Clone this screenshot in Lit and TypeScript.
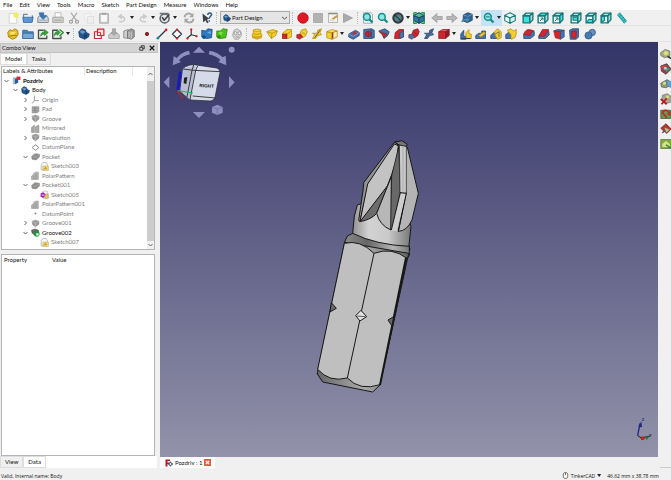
import { LitElement, html, css, svg } from "lit";
import { customElement, property } from "lit/decorators.js";

const p = (d: string, fill = "none", stroke = "none", w = 1) =>
  svg`<path d=${d} fill=${fill} stroke=${stroke} stroke-width=${w} stroke-linejoin="round"></path>`;
const c = (x: number, y: number, r: number, fill = "none", stroke = "none", w = 1) =>
  svg`<circle cx=${x} cy=${y} r=${r} fill=${fill} stroke=${stroke} stroke-width=${w}></circle>`;

const hexBox = (top: string, left: string, right: string, line: string) =>
  svg`${p("M8 1L15 4.500L8 8L1 4.500Z", top, line, 1.400)}${p("M1 4.500L8 8V15L1 11.500Z", left, line, 1.400)}${p("M8 8L15 4.500V11.500L8 15Z", right, line, 1.400)}`;

const T = "#17797a";
const C = "#3ce0dc";
const teal = (face: number) => svg`
  ${p("M1.500 5H10.500V14.500H1.500Z", face === 0 ? C : "#eefafa", T, 1.800)}
  ${p("M1.500 5L5.500 1.500H14.500L10.500 5Z", face === 1 ? C : "#b9e6e4", T, 1.800)}
  ${p("M10.500 5L14.500 1.500V10.500L10.500 14.500Z", face === 2 ? C : "#a4dbd9", T, 1.800)}
  ${face === 1 || face === 2 ? p("M4 12L8 8M5 8H8V11", "none", T, 1.300) : ""}
  ${face === 3 ? p("M4 7H10V11H4Z", C, T, 1.400) : ""}
  ${face === 4 ? p("M2 14L5 10H10V14Z", C, T, 1.400) : ""}
  ${face === 5 ? p("M2 6L6 6V11L2 14Z", C, T, 1.400) : ""}`;

const lens = (handle: string) => svg`${p("M9 9L14 14", "none", handle, 3)}${c(6.5, 6.5, 4.500, "#8fe6e4", handle, 2)}`;
const Y = "#f2d02c", YD = "#b98a10", R = "#cf2630", RD = "#8e1b28", B = "#4673ab", BD = "#23446f";

const feature = (kind: number, a: string, ad: string, b: string) => [
  svg`${p("M2 10V13L8 15L14 13V10Z", b, ad, 0.8)}${p("M1 9C3 6 13 6 15 9C13 13 3 13 1 9Z", a, ad, 1)}${p("M3 3V7C5 9 11 9 13 7V3Z", a, ad, 1)}${p("M3 3C5 1 11 1 13 3C11 5 5 5 3 3Z", "#fae66c", ad, 1)}`,
  svg`${p("M1 5L9 2L15 4L13 10L7 14Z", a, ad, 1)}${p("M1 5L8 7L15 4M8 7L7 14", "none", ad, 1)}`,
  svg`${p("M2 7L8 2H14V12L9 14H2Z", a, ad, 1)}${p("M2 8H8V14H2Z", b, RD, 0.8)}${p("M8 8L14 4", "none", ad, 1)}`,
  svg`${p("M7 3L13 1L15 5L13 10L9 13L5 9Z", a, ad, 1)}${p("M1 9L6 8L9 12L5 15L1 13Z", b, RD, 0.8)}${p("M8 6L12 8", "none", ad, 1)}`,
  svg`${p("M2 14L5 9L2 7L8 7L9 3L14 1L12 6L14 9L9 10L6 14Z", a, ad, 1)}${p("M5 13L12 3", "none", "#555", 1.300)}`,
  svg`${p("M1 5L8 6V15L1 13Z", a, ad, 1)}${p("M8 6L15 4V12L8 15Z", b, ad, 1)}${p("M1 5L8 2L15 4L8 6Z", "#fae66c", ad, 1)}${p("M9 6V14", "none", RD, 1.500)}`,
][kind];

const arrowCurve = (col: string) => svg`${p("M4 13C13 14 14 6 7 6", "none", col, 2)}${p("M8 2V10L2 6Z", col)}`;

const icons: Record<string, unknown> = {
  new: svg`${p("M3 2H13V15H3Z", "#fcfcfa", "#c9c9c4", 1)}${c(12, 4, 3.500, "#f1ef55")}`,
  open: svg`${p("M2 3H7L8 5H14V13H2Z", "#829bb5", "#536b83", 1)}${p("M3 4H13V8H3Z", "#f0f0f0")}${p("M1 7H15L13 14H2Z", "#5b96d6", "#346b9f", 1)}`,
  save: svg`${p("M1 8L3 5H13L15 8V14H1Z", "#d4d8db", "#65717c", 1)}${p("M3 1H9V5H13L8 10L4 5H6L3 3Z", "#3978c0", "#285e9d", 0.7)}${p("M3 11H13", "none", "#899aa8", 1)}`,
  print: svg`${p("M4 1H12V7H4Z", "#fff", "#aaa", 1)}${p("M1 7H15V14H1Z", "#d0d0cf", "#9b9b9b", 1)}${p("M3 11H13", "none", "#999", 1)}`,
  cut: svg`${p("M4 1L11 11M12 1L5 11", "none", "#a6a6a6", 1.600)}${c(4, 13, 2, "none", "#999", 1.500)}${c(12, 13, 2, "none", "#999", 1.500)}`,
  copy: svg`${p("M2 2H10V11H2Z", "#f4f4f4", "#e2e2e2", 1)}${p("M6 6H14V15H6Z", "#eee", "#dadada", 1)}`,
  paste: svg`${p("M2 2H14V15H2Z", "#c9c9c9", "#a6a6a6", 1)}${p("M4 4H12V13H4Z", "#f8f8f8")}${p("M5 1H11V4H5Z", "#aaa")}`,
  undo: arrowCurve("#cacaca"),
  redo: svg`<g transform="translate(16 0) scale(-1 1)">${arrowCurve("#cacaca")}</g>`,
  check: svg`${c(7.5, 8.5, 6, "#e3e6e7", "#596067", 2)}${p("M4 7L7 11L14 3", "none", "#394047", 2)}${p("M1 2H13", "none", "#6b7379", 2)}`,
  refresh: svg`${p("M2 7C3 1 9 1 12 4M14 9C13 15 7 15 4 12", "none", "#a6a6a6", 2.400)}${p("M14 1V7H8ZM2 15V9H8Z", "#a6a6a6")}`,
  what: svg`${p("M2 2L3 14L6 11L8 15L10 14L8 10L11 9Z", "#3a4147")}${p("M9 4C9 0 15 1 14 4C13 6 11 6 11 9M11 11V13", "none", "#2f5b8b", 2)}`,
  record: c(8, 8, 7, "#e11722", "#b20d18", 1),
  stop: p("M2 2H14V14H2Z", "#b2b2b2", "#9f9f9f", 1),
  edit: svg`${p("M2 2H14V14H2Z", "#f3f3ee", "#a4a49d", 1)}${p("M2 2H14", "none", "#8a8a80", 2)}${p("M4 11H10", "none", "#c0c0ba", 1)}${p("M6 9L13 4L15 6L9 10Z", "#c99a4a")}`,
  play: p("M2 2L14 8L2 14Z", "#aaa", "#999", 1),
  fit: svg`${p("M2 1H12L14 3V15H2Z", "#edf4f4", "#999", 1)}${lens("#168b8c")}`,
  fitSel: lens("#168b8c"),
  draw: svg`${c(8, 8, 6.300, "#61777c", "#2c393d", 2.600)}${c(8, 8, 2.500, "#38a6a4")}${p("M4 4L12 12", "none", "#2c393d", 1.600)}`,
  bbox: svg`${hexBox("#5ab79b", "#3476b0", "#2c7699", "#174e5f")}${p("M1 1H5M1 1V5M11 1H15V5M1 11V15H5M15 11V15H11", "none", "#1f9a4a", 1.800)}`,
  back: p("M1 8L8 2V6H15V10H8V14Z", "#b7b7b7", "#9b9b9b", 1),
  fwd: p("M15 8L8 2V6H1V10H8V14Z", "#b7b7b7", "#9b9b9b", 1),
  link: svg`${p("M3 4L9 1L15 3V11L9 14L3 12Z", "#2f659c", "#214060", 1)}${p("M3 4L9 6L15 3", "none", "#83acd0", 1)}${p("M1 13C2 9 5 8 7 9L8 6L12 11L7 14L7 12C4 11 3 13 1 13Z", "#4a93bd", "#1e4c73", 0.7)}`,
  zoom: svg`${lens("#168b8c")}${p("M4 6.500H9", "none", "#087777", 1.300)}`,
  iso: hexBox("#e7f8f8", "#f3fbfb", "#d9f1f1", T),
  front: teal(0), top: teal(1), right: teal(2), rear: teal(3), bottom: teal(4), left: teal(5),
  ruler: svg`${p("M2 4L5 1L14 12L11 15Z", "#39bdc6", "#16878f", 1)}${p("M7 4L5 6M10 7L8 9M12 10L10 12", "none", "#0d737a", 1)}`,

  part: svg`${p("M1 6L4 2L7 4L10 1L14 3L15 8L12 13L7 15L2 12Z", "#e9bf22", "#94700e", 1)}${p("M3 7L7 5L12 6L8 9Z", "#ffe86a")}${p("M3 11L8 10L13 10", "none", "#94700e", 1)}`,
  folder: svg`${p("M1 3H7L8 5H15V14H1Z", "#4c81b9", "#315f90", 1)}${p("M1 7H15V14H1Z", "#76a9d8", "#315f90", 0.8)}`,
  mkLink: svg`${p("M9 3H2V14H13V10", "none", "#46524a", 1.800)}${p("M5 11C5 6 8 5 10 5V2L15 6L10 10V8C8 8 6 9 5 11Z", "#36a836", "#1a6d1f", 0.8)}`,
  mkLinks: svg`${p("M7 3H1V14H12V11", "none", "#46524a", 1.800)}${p("M3 11C3 6 5 5 7 5V2L11 6L7 10V8C5 8 4 9 3 11Z", "#36a836", "#1a6d1f", 0.7)}${p("M10 2L15 6L10 11", "none", "#2c862c", 1.800)}`,
  body: svg`${p("M1 5L5 1L10 3L11 6L15 8L14 12L9 15L2 12Z", "#24588f", "#173555", 1)}${p("M2 5L6 3L10 5L6 8Z", "#6b9bca")}${p("M8 9L12 8V12L8 14Z", "#173f6e")}`,
  sketch: svg`${p("M2 5H11V14H2Z", "#fff", R, 1.600)}${p("M6 1.500H14.500V10H6Z", "#fbe4e4", R, 1.600)}${c(8, 8, 2.300, "#fff", R, 1.500)}`,
  map: svg`${p("M1 9L4 7H12L15 9V14H1Z", "#cacaca", "#999", 1)}${p("M6 1H10V6H12L8 10L4 6H6Z", "#aaa", "#888", 0.700)}`,
  valid: svg`${p("M1 4L7 2V14L1 13Z", "#d0d0d0", "#777", 1)}${p("M6 4L11 1L15 3V12L11 15L6 13Z", "#9a9a9a", "#666", 1)}${p("M8 5V13M11 5V14", "none", "#ddd", 1)}`,
  point: c(8, 8, 2.200, "#a51823", "#611", 1),
  line: svg`${p("M2 14L14 2", "none", "#27313a", 1.600)}${c(2.5, 13.5, 1.800, "#1e8c93")}${c(13.5, 2.5, 1.800, R)}`,
  plane: svg`${p("M2 8L8 2L14 8L8 14Z", "#fff", "#3a444c", 1.800)}${c(8, 2, 1.500, R)}${c(8, 14, 1.500, R)}`,
  cs: svg`${p("M7 1V9L1 14M7 9L15 11", "none", "#333", 1.600)}${c(7, 2, 1.500, R)}${c(2, 14, 1.500, R)}${c(14, 11, 1.500, R)}`,
  binder: svg`${p("M1 3L6 4L9 1L15 2L14 13L8 14L1 12Z", "#2e7ac2", "#174576", 1)}${c(4, 12, 2.500, "#1b4d86")}${p("M8 6L13 4V8Z", "#72b3e5")}`,
  subBinder: svg`${p("M1 4L6 4L9 1L15 2L13 13L6 14L1 12Z", "#4fc21a", "#2d790d", 1)}${p("M3 6L9 5L7 10Z", "#85e34b")}${c(4, 12, 2.300, "#2d8b12")}`,
  clone: svg`${p("M4 3L8 1L13 4L14 10L10 15H5L2 10Z", "#d5d5d5", "#9e9e9e", 1)}${c(6, 7, 2, "#f5f5f5", "#888", 1)}${c(11, 7, 2, "#f5f5f5", "#888", 1)}${p("M6 12H11", "none", "#888", 1)}`,
  pad: feature(0, Y, YD, "#e7b51a"),
  rev: feature(1, Y, YD, R),
  addLoft: feature(2, Y, YD, R),
  addPipe: feature(3, Y, YD, R),
  addHelix: feature(4, Y, YD, R),
  addPrim: feature(5, Y, YD, "#fff0a0"),
  pocket: svg`${p("M1 8L10 3L15 6V10L7 15L1 12Z", B, BD, 1)}${p("M1 8L7 11L15 6", "none", "#8ba9cc", 1)}${p("M5 8L9 5L12 7L8 9Z", R)}`,
  hole: svg`${p("M1 2L11 1L15 3V13L11 14H1Z", B, BD, 1)}${c(7, 8, 3.700, R, RD, 1)}${p("M7 5V11M11 2V14", "none", BD, 1)}`,
  groove: svg`${p("M1 4L9 1L15 5L13 10L8 14L6 9Z", B, BD, 1)}${p("M2 5L12 8L8 13L6 9Z", R, RD, 0.8)}`,
  subLoft: svg`${p("M3 6L8 2H14V12L9 14H2Z", R, RD, 1)}${p("M9 7L14 3V12L9 14Z", B, BD, 0.8)}`,
  subPipe: feature(3, R, RD, B),
  subHelix: feature(4, B, BD, R),
  subPrim: svg`${p("M1 5L6 2H15L10 5Z", "#e85b60", RD, 1)}${p("M1 5H10V14H1Z", R, RD, 1)}${p("M10 5L15 2V10L10 14Z", RD, RD, 1)}`,
  mirror: svg`${p("M1 15V8L5 3V11H8V15Z", B, BD, 1)}${p("M8 14V6L12 2V8H15V14Z", Y, YD, 1)}${p("M2 14H14", "none", BD, 1.500)}`,
  linear: svg`${p("M1 10L5 7H9V4H14V14H1Z", B, BD, 1)}${p("M5 10L12 5L14 7L8 12Z", Y, YD, 1)}`,
  polar: svg`${p("M1 10L5 6L9 9V14H1Z", B, BD, 1)}${p("M6 5L10 1L15 5V13L10 15L7 10Z", Y, YD, 1)}${p("M7 8L12 5V12", "none", "#555", 1)}`,
  multi: svg`${p("M1 9L4 6L9 8V14H1Z", B, BD, 1)}${p("M3 3L8 1L11 4L15 2V8L13 13L8 15L8 9Z", Y, YD, 1)}`,
  fillet: svg`${p("M1 8L6 3H12L15 5V10L10 14H1Z", B, BD, 1)}${p("M1 9C2 4 5 2 8 2L15 4C11 5 10 8 10 10Z", R, RD, 0.8)}`,
  chamfer: svg`${p("M1 11L6 3H14L15 9L10 14H1Z", B, BD, 1)}${p("M1 11L6 2H14L9 11Z", R, RD, 0.8)}`,
  draft: svg`${p("M1 4L6 2L15 3L10 5Z", B, BD, 1)}${p("M1 4L10 5V15L3 13Z", R, RD, 0.8)}${p("M10 5L15 3V12L10 15Z", B, BD, 0.8)}`,
  thick: svg`${p("M2 3L6 1H14V12L11 15H3Z", B, BD, 1)}${p("M5 4H11L11 12L8 14L5 12Z", R, RD, 0.8)}`,
  bool: svg`${c(11, 6, 4.300, "#648fbf", "#2f5987", 1)}${c(6, 10, 4.800, "#477bb2", "#2f5987", 1)}`,

  doc: svg`${p("M2 3H8V14H2Z", "#b9c6d2", "#8a9aa8", 0.800)}${p("M5 5L11 4V12L5 14Z", "#2d5b9a")}${p("M8 1H15V7H8Z", R)}`,
  origin: svg`${p("M6 1V10L2 15M6 10H14", "none", "#929292", 1.600)}`,
  gFeature: svg`${p("M2 4L8 2L14 4V9L8 14L3 10Z", "#999", "#858585", 1)}${p("M2 4L8 7L14 4M8 7V14", "none", "#c4c4c4", 1)}`,
  gPad: svg`${p("M2 3H14V12L10 14H2Z", "#aaa", "#858585", 1)}${p("M3 6H13M3 10H13M7 3V13", "none", "#7e7e7e", 1)}`,
  gMirror: svg`${p("M1 15V6L6 2V15ZM8 15V5L14 2V15Z", "#aaa", "#858585", 1)}`,
  gPattern: svg`${p("M1 15V9L5 6V4L9 2H13V15Z", "#b2b2b2", "#909090", 1)}${p("M5 8V14M9 5V14", "none", "#858585", 1)}`,
  gPocket: svg`${p("M1 8L7 3L15 4V9L9 14L2 13Z", "#8d8d8d", "#858585", 1)}${p("M3 9L9 9L14 5", "none", "#bbb", 1)}`,
  gPlane: p("M2 8L8 3L14 8L8 13Z", "#fff", "#777", 1.500),
  gPoint: c(8, 8, 1.800, "#888"),
  sk: svg`${p("M2 5L5 1H11L13 4V14H2Z", "#fafafa", "#aaa", 1.300)}${p("M5 7H15V15H5Z", "#eed878", "#bbb07c", 1)}${p("M6 13L10 8L13 13Z", "#c8a72c")}`,
  skErr: svg`${p("M5 2H13V14H5Z", "#fafafa", "#aaa", 1)}${p("M8 7H15V15H8Z", "#e3c050", "#aaa", 1)}${p("M1 6L6 4L10 8L6 14L1 12Z", "#a41cb6")}${p("M3 9H8", "none", "#fff", 1.500)}`,
  tip: svg`${p("M1 4L7 2L13 4V9L7 13L2 9Z", "#666", "#333", 1)}${c(10, 10, 5, "#1b983a")}${p("M9 9H14V14H9Z", "#fff", "#1b983a", 1)}`,
  logo: svg`${p("M1 1H10V4H5V7H9V10H5V15H1Z", "#b91923")}${c(11, 10, 3, "#dce3ec", "#31527d", 2)}${p("M11 5V7M11 13V15M6 10H8M14 10H16", "none", "#31527d", 2)}`,
  mouse: svg`${p("M3 5C3 0 13 0 13 5V11C13 16 3 16 3 11Z", "#fff", "#333", 1.600)}${p("M8 2V7", "none", "#333", 1.500)}`,
  measureLinear: svg`${p("M1 6L7 2L13 4V11L6 13L1 10Z", "#a6aa8d", "#6c745a", 1)}${c(8, 7, 3, "#dde06a")}${p("M10 11L15 14", "none", "#333", 2)}`,
  measureAngular: svg`${p("M1 4L9 1L15 8L8 15L2 11Z", "#8d4a42", "#523", 1)}${p("M7 5L14 8L8 12Z", "#3a9b78")}${p("M2 6L7 4", "none", "#e44", 2)}${c(7, 7, 2, "#b9c6d2")}`,
  measureRefresh: svg`${p("M1 7L8 3L14 8L9 13L2 12Z", "#8ba07a", "#575f4e", 1)}${p("M9 2L16 6V13L9 10Z", "#6d9fd0", "#4a6a8d", 1)}${c(6, 7, 2, "#e2e06a")}`,
  measureClear: svg`${p("M3 3L10 1L15 5V12L8 14L3 10Z", "#a6a596", "#777", 1)}${p("M1 8L9 15M9 7L2 15", "none", "#b81a22", 2.500)}${c(10, 5, 2, "#e2e06a")}`,
  measureToggleAll: svg`${p("M1 3H14V14H1Z", "#69984a", "#465a38", 1)}${p("M3 8C4 1 12 2 13 9L10 7M4 7L9 13", "none", "#b3342f", 2.500)}`,
  measureToggle3d: svg`${p("M1 7L8 1L15 8L9 14Z", "#b1382f", "#723", 1)}${p("M6 6L13 9L8 13Z", "#a8c78d")}${p("M3 13L7 10", "none", "#456", 2)}`,
  measureToggleDelta: svg`${p("M1 2H15V14H1Z", "#84a944", "#5b7738", 1)}${p("M3 8L8 4L13 8V12H3Z", "#d6e486")}${p("M8 9L15 14", "none", "#374", 2)}`,
};

const glyph = (name: string) =>
  html`<svg class="icon" viewBox="0 0 16 16" aria-hidden="true">${icons[name]}</svg>`;

const sharedStyles = css`
  * { box-sizing: border-box; }
  button { border: 0; padding: 0; margin: 0; background: none; font: inherit; color: inherit; }
  .icon { display: block; width: 12px; height: 12px; flex: none; }
`;

/* Toolbar entries: an icon name, "v" for a drop-down arrow, a number for a gap, "|" for a handle. */
type Entry = string | number;

const fileBar: Entry[] = [5, "new", "open", "save", "print", 1, "cut", "copy", "paste", 3, "undo", "v", "redo", "v", 1,
  "check", "v", 3, "refresh", 3, "what", "|"];
const viewBar: Entry[] = ["|", "record", "stop", "edit", "play", "|", "fit", "fitSel", "draw", "v", "bbox", 3,
  "back", "fwd", "link", "v", 1, "zoom*", "v*", "iso", 3, "front", "top", "right", 3, "rear", "bottom", "left", 1, "ruler"];
const designBar: Entry[] = [5, "part", "folder", "mkLink", "mkLinks", "v", "|", "body", "sketch", "map", "valid", 3,
  "point", "line", "plane", "cs", "binder", "subBinder", "clone", "|",
  "pad", "rev", "addLoft", "addPipe", "addHelix", "addPrim", "v", 1,
  "pocket", "hole", "groove", "subLoft", "subPipe", "subHelix", "subPrim", "v", 1,
  "mirror", "linear", "polar", "multi", 3, "fillet", "chamfer", "draft", "thick", 1, "bool"];

@customElement("tool-strip")
export class ToolStrip extends LitElement {
  @property({ attribute: false }) entries: Entry[] = [];
  static styles = [sharedStyles, css`
    :host { display: flex; align-items: center; height: 16px; flex: none; }
    .tool { width: 15px; height: 16px; display: grid; place-items: center; flex: none; }
    .drop { width: 6px; height: 16px; display: grid; place-items: center; flex: none; }
    .caret { width: 4px; height: 3px; background: #222; clip-path: polygon(0 0, 100% 0, 50% 100%); }
    .on { background: #c5e1f4; }
    .gap1 { width: 1px; } .gap3 { width: 3px; } .gap5 { width: 5px; }
    .grip { width: 5px; height: 12px; display: grid; place-items: center; flex: none; }
    .grip::before { content: ""; height: 12px; border-left: 1px dotted #b8b8b8; }
  `];
  render() {
    return this.entries.map((e) => {
      if (typeof e === "number") return html`<span class="gap${e}"></span>`;
      if (e === "|") return html`<span class="grip"></span>`;
      const on = e.endsWith("*") ? "on" : "";
      const name = e.replace("*", "");
      return name === "v"
        ? html`<button class="drop ${on}" aria-label="More"><span class="caret"></span></button>`
        : html`<button class="tool ${on}" aria-label=${name}>${glyph(name)}</button>`;
    });
  }
}

type TreeNode = [depth: number, arrow: string, icon: string, label: string, look?: string];
const nodes: TreeNode[] = [
  [0, "open", "doc", "Pozdriv", "bold"], [1, "open", "body", "Body", "dark"],
  [2, "shut", "origin", "Origin"], [2, "shut", "gPad", "Pad"], [2, "shut", "gFeature", "Groove"],
  [2, "", "gMirror", "Mirrored"], [2, "shut", "gFeature", "Revolution"], [2, "", "gPlane", "DatumPlane"],
  [2, "open", "gPocket", "Pocket"], [3, "", "sk", "Sketch003"], [2, "", "gPattern", "PolarPattern"],
  [2, "open", "gPocket", "Pocket001"], [3, "", "skErr", "Sketch005"], [2, "", "gPattern", "PolarPattern001"],
  [2, "", "gPoint", "DatumPoint"], [2, "shut", "gFeature", "Groove001"],
  [2, "open", "tip", "Groove002", "dark"], [3, "", "sk", "Sketch007"],
];

@customElement("combo-view")
export class ComboView extends LitElement {
  static styles = [sharedStyles, css`
    :host { display: flex; flex-direction: column; min-height: 0; }
    .title { display: flex; align-items: center; height: 10px; margin-top: 1px; padding: 0 2px 0 1px; background: #d3d3d3; border: 1px solid #c2c2c2; gap: 4px; flex: none; }
    .title h2 { margin: 0; font: inherit; flex: 1; }
    .title svg { width: 6px; height: 6px; display: block; }
    .tabs { display: flex; align-items: stretch; height: 12px; flex: none; }
    .tab { padding: 0 4px; background: #f0f0f0; border: 1px solid #dedede; }
    .tab.active { background: #fff; }
    .pane { background: #fff; border: 1px solid #b4b4b4; margin: 0 3px 0 1px; min-height: 0; }
    .tree { flex: 10; margin-top: 1px; display: grid; grid-template-columns: 1fr 7px; grid-template-rows: 9px 1fr; }
    .head { display: grid; grid-template-columns: 81px 48px 1fr; padding-left: 1px; line-height: 8px; }
    .head span + span { border-left: 1px solid #e8e8e8; }
    .head span:nth-child(2) { padding-left: 1px; }
    .bar { grid-column: 2; grid-row: 1 / 3; background: #cdcdcd; display: flex; flex-direction: column; justify-content: space-between; }
    .bar button { display: grid; place-items: center; background: #f0f0f0; height: 14px; }
    .bar button:last-child { height: 8px; }
    .rows { list-style: none; margin: 0; padding: 0 0 2px; display: grid; grid-auto-rows: 1fr; min-height: 0; color: #808080; }
    .row { display: flex; align-items: center; min-height: 0; padding-left: 1px; gap: 2px; line-height: 8px; }
    .d1 { padding-left: 10px; } .d2 { padding-left: 20px; } .d3 { padding-left: 29px; }
    .row .icon { width: 9px; height: 9px; }
    .chev { width: 7px; height: 6px; flex: none; }
    .chev path { fill: none; stroke: #666; }
    .bold { font-weight: 700; color: #000; } .dark { color: #111; }
    .props { flex: 11; margin-top: 4px; }
    table { border-collapse: collapse; width: 100%; table-layout: fixed; }
    th { font-weight: 400; text-align: left; padding: 1px 2px; line-height: 8px; }
    th:first-child { width: 48px; }
    .bottom { background: #fff; margin-right: 1px; }
  `];
  chev(kind: string) {
    return html`<svg class="chev" viewBox="0 0 7 6" aria-hidden="true">${kind === "open" ? svg`<path d="M1.500 2L3.500 4L5.500 2"></path>`
      : kind === "shut" ? svg`<path d="M2.500 1L4.500 3L2.500 5"></path>` : kind === "up" ? svg`<path d="M1.500 4L3.500 2L5.500 4"></path>` : ""}</svg>`;
  }
  render() {
    return html`
      <div class="title"><h2>Combo View</h2>
        <button aria-label="Float"><svg viewBox="0 0 8 8"><path d="M1 3H5V7H1ZM3 3V1H7V5H5" fill="none" stroke="#111"></path></svg></button>
        <button aria-label="Close"><svg viewBox="0 0 8 8"><path d="M1 1L7 7M7 1L1 7" fill="none" stroke="#111" stroke-width="1.500"></path></svg></button>
      </div>
      <div class="tabs"><button class="tab active">Model</button><button class="tab">Tasks</button></div>
      <div class="pane tree">
        <div class="head"><span>Labels &amp; Attributes</span><span>Description</span><span></span></div>
        <ul class="rows" role="tree">${nodes.map(([d, a, i, label, look]) => html`
          <li class="row d${d}" role="treeitem">${this.chev(a)}${glyph(i)}<span class=${look ?? ""}>${label}</span></li>`)}</ul>
        <div class="bar"><button aria-label="Scroll up">${this.chev("up")}</button><button aria-label="Scroll down">${this.chev("open")}</button></div>
      </div>
      <div class="pane props"><table><thead><tr><th>Property</th><th>Value</th></tr></thead></table></div>
      <div class="tabs bottom"><button class="tab">View</button><button class="tab active">Data</button></div>`;
  }
}

@customElement("model-canvas")
export class ModelCanvas extends LitElement {
  static styles = css`
    :host { display: block; min-height: 0; background: linear-gradient(#333468, #9292aa); overflow: hidden; }
    svg { display: block; width: 100%; height: 100%; }
    .cube-text { font: 700 14px "Liberation Sans", sans-serif; fill: #111; }
    .axis-text { font: 700 12px "Liberation Sans", sans-serif; }
  `;
  render() {
    return html`<svg viewBox="160 42 498 415" role="img" aria-label="Pozdriv bit model">
      <defs>
        <linearGradient id="neck"><stop offset="0" stop-color="#777"></stop><stop offset=".35" stop-color="#d2d2d2"></stop><stop offset=".65" stop-color="#cacaca"></stop><stop offset="1" stop-color="#777"></stop></linearGradient>
        <linearGradient id="collar"><stop offset="0" stop-color="#8a8a8a"></stop><stop offset=".35" stop-color="#666"></stop><stop offset=".75" stop-color="#b5b5b5"></stop><stop offset="1" stop-color="#777"></stop></linearGradient>
        <linearGradient id="foot"><stop offset="0" stop-color="#666"></stop><stop offset=".5" stop-color="#aaa"></stop><stop offset="1" stop-color="#666"></stop></linearGradient>
      </defs>
      <g transform="translate(155 40) scale(.33333)">
        <g fill="#8d8fbe">
          <path d="M132 20L150 38H114ZM132 234L150 216H114ZM26 127L43 109V145ZM239 127L222 109V145Z"></path>
          <circle cx="230" cy="29" r="9"></circle>
          <path d="M102 32Q77 37 65 54L56 48L53 76L78 66L72 61Q83 48 105 43ZM164 32Q190 37 203 52L212 47L214 76L190 66L196 60Q184 48 161 43Z"></path>
          <path d="M171 201L187 194L203 201V218L187 225L171 218Z"></path>
        </g>
        <path d="M171 201L187 207L203 201M187 207V225" fill="none" stroke="#6b6d9e" stroke-width="2"></path>
        <path d="M84 87Q86 80 105 75L118 74L184 84Q195 86 195 97L180 172Q177 183 165 183L108 180L76 154Z" fill="#d6dbea" stroke="#222" stroke-width="2"></path>
        <path d="M84 85L122 77L105 179L76 154Z" fill="#b8bfd3"></path>
        <path d="M84 87L116 91L195 95M128 78L122 91L105 179M116 75L111 91L96 171M113 168L181 174" fill="none" stroke="#222" stroke-width="2.500"></path>
        <path d="M87 113L97 111L94 132L86 130Z" fill="#222"></path>
        <path d="M76 95L68 152" stroke="#1219c5" stroke-width="8"></path>
        <path d="M66 151L84 176" stroke="#b7272c" stroke-width="4"></path>
        <path d="M68 152L114 159" stroke="#21b35a" stroke-width="3"></path>
        <text class="cube-text" x="133" y="141" transform="rotate(4 133 141)">RIGHT</text>
      </g>
      <g transform="translate(300 130) scale(.33333)" stroke="#171717" stroke-width="3" stroke-linejoin="round">
        <path d="M172 225L163 258L158 310L138 345L330 360L327 345L333 290L300 180Z" fill="url(#neck)"></path>
        <path d="M158 310Q230 345 328 349L328 376L322 385L133 338L142 318Z" fill="url(#collar)"></path>
        <path d="M283 37L290 34L295 50L205 162L180 275L176 271L190 175L191 158Z" fill="#929292"></path>
        <path d="M180 275Q215 268 230 250L274 145L293 55L262 165Z" fill="#6c6c6c"></path>
        <path d="M283 42L295 47Q292 95 262 168L180 275L203 162Z" fill="#c3c3c3"></path>
        <path d="M274 140L273 300Q239 286 230 250Z" fill="#b7b7b7"></path>
        <path d="M296 50L301 188L276 292L272 300L275 138Z" fill="#686868" stroke-width="2"></path>
        <path d="M299 45L322 52L355 190L336 270Q320 304 295 304L318 190Z" fill="#b4b4b4"></path>
        <path d="M298 43L319 45L319 190L300 188Z" fill="#cbcbcb" stroke-width="2"></path>
        <path d="M301 188L319 190L290 304L273 300Z" fill="#cecece" stroke="none"></path>
        <path d="M300 188L319 190L295 304M301 188L274 300" fill="none"></path>
        <path d="M283 37L305 32L322 43L319 49L298 45Z" fill="#777"></path>
        <path d="M309 46V188" stroke="#999" stroke-width="2"></path>
        <path d="M134 337L326 370L240 765L218 786L68 756L52 732L54 718Z" fill="url(#foot)"></path>
        <path d="M133 340Q180 328 222 370Q275 350 321 385L240 764Q180 784 142 744Q88 758 53 718Z" fill="#bfbfbf"></path>
        <path d="M222 370L184 545M180 568L142 744" fill="none"></path>
        <path d="M318 383L240 765" fill="none" stroke-width="6"></path>
        <path d="M167 557L183 541L200 560L180 573Z" fill="#e1e1e1"></path><path d="M170 558L196 560" stroke-width="2"></path>
        <path d="M94 518L109 535L90 546ZM264 570L281 560L276 588Z" fill="#686868"></path>
      </g>
      <g transform="translate(560 410) scale(.33333)">
        <path d="M233 77L240 40" stroke="#20267d" stroke-width="4"></path><path d="M235 50L244 34L246 52Z" fill="#20267d"></path>
        <path d="M233 77L245 84L270 78" fill="none" stroke="#222" stroke-width="3"></path>
        <circle cx="248" cy="85" r="6" fill="#bc2424"></circle><path d="M254 80L269 79L260 90Z" fill="#287333"></path>
        <text class="axis-text" x="245" y="34" fill="#20267d">Z</text><text class="axis-text" x="267" y="82" fill="#222">Y</text>
      </g>
    </svg>`;
  }
}

@customElement("app-root")
export class AppRoot extends LitElement {
  static styles = [sharedStyles, css`
    :host { display: flex; flex-direction: column; height: 100vh; overflow: hidden; background: #f0f0f0; color: #111; font: 6px/8px Lato, "Open Sans", sans-serif; }
    .menu { display: flex; height: 10px; padding-left: 3px; gap: 7px; background: #fff; flex: none; align-items: center; }
    .strip { display: flex; height: 16px; align-items: center; flex: none; border-bottom: 1px solid #e4e4e4; }
    .pick { display: flex; align-items: center; flex: none; width: 70px; height: 13px; padding: 0 2px; gap: 1px; border: 1px solid #aaa; background: #e5e5e5; margin-left: 1px; }
    .pick .icon { width: 8px; height: 8px; }
    .pick select { appearance: none; border: 0; background: none; padding: 0; margin: 0; flex: 1; min-width: 0; font: inherit; color: inherit; outline: 0; }
    .pick .down { width: 5px; height: 4px; flex: none; }
    .work { flex: 1; min-height: 0; display: grid; grid-template-columns: 158px 1fr 11px; column-gap: 2px; }
    .center { display: grid; grid-template-rows: 1fr 11px; min-height: 0; }
    .docs { display: flex; }
    .doc { background: #fff; display: flex; align-items: center; gap: 2px; padding: 0 4px 0 5px; }
    .doc .icon { width: 8px; height: 8px; }
    .close { width: 7px; height: 7px; background: #d8603e; display: grid; place-items: center; }
    .close svg { width: 5px; height: 5px; }
    .macros { display: flex; flex-direction: column; gap: 3px; padding-top: 6px; overflow: hidden; border-bottom: 1px solid #ccc; }
    .macros button { width: 12px; height: 12px; }
    .status { display: flex; align-items: center; height: 12px; flex: none; padding: 3px 12px 0 1px; gap: 6px; font: 5px/8px "Open Sans", sans-serif; }
    .status .msg { flex: 1; }
    .status .nav { display: flex; align-items: center; gap: 2px; }
    .status .icon { width: 7px; height: 7px; }
    .caret { width: 4px; height: 3px; background: #222; clip-path: polygon(0 0, 100% 0, 50% 100%); }
  `];
  render() {
    return html`
      <nav class="menu">${["File", "Edit", "View", "Tools", "Macro", "Sketch", "Part Design", "Measure", "Windows", "Help"].map((m) => html`<button>${m}</button>`)}</nav>
      <div class="strip">
        <tool-strip .entries=${fileBar}></tool-strip>
        <label class="pick">${glyph("body")}<select aria-label="Workbench"><option>Part Design</option></select>
          <svg class="down" viewBox="0 0 5 4"><path d="M0 1L2.500 3L5 1" fill="none" stroke="#555"></path></svg></label>
        <tool-strip .entries=${viewBar}></tool-strip>
      </div>
      <div class="strip"><tool-strip .entries=${designBar}></tool-strip></div>
      <main class="work">
        <combo-view></combo-view>
        <div class="center">
          <model-canvas></model-canvas>
          <div class="docs"><div class="doc">${glyph("logo")}<span>Pozdriv : 1</span>
            <button class="close" aria-label="Close document"><svg viewBox="0 0 6 6"><path d="M1 1L5 5M5 1L1 5" stroke="#fff" stroke-width="1.500"></path></svg></button></div></div>
        </div>
        <aside class="macros">${["measureLinear", "measureAngular", "measureRefresh", "measureClear", "measureToggleAll", "measureToggle3d", "measureToggleDelta"].map((m) => html`<button aria-label=${m}>${glyph(m)}</button>`)}</aside>
      </main>
      <footer class="status"><span class="msg">Valid, Internal name: Body</span>
        <button class="nav">${glyph("mouse")}<span>TinkerCAD</span><span class="caret"></span></button>
        <span>46.62 mm x 38.78 mm</span></footer>`;
  }
}
